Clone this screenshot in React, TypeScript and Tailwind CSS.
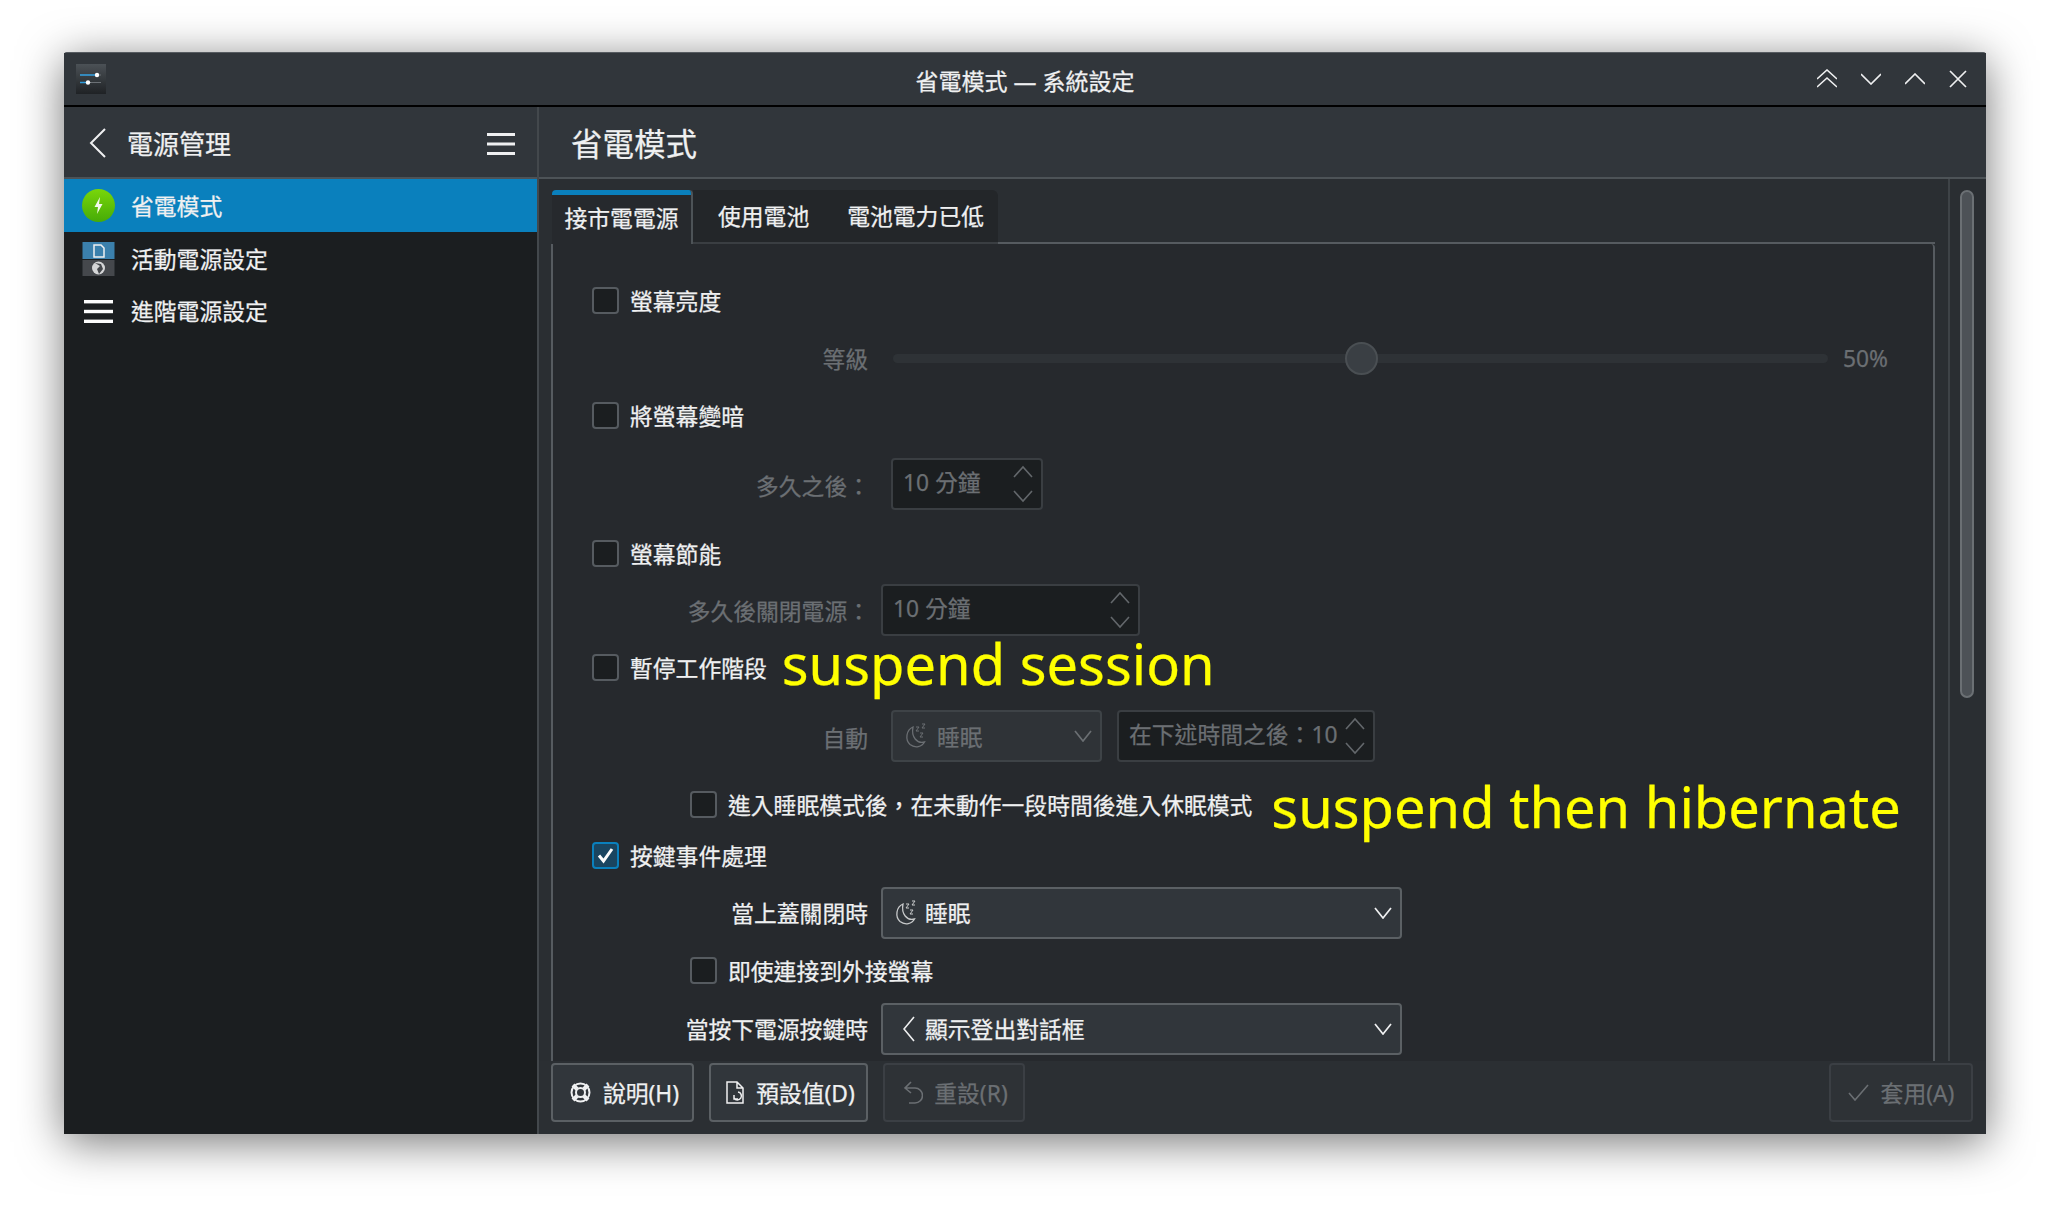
import React from "react";

const Check = ({ checked = false }: { checked?: boolean }) => (
  <span className={`flex h-[27px] w-[27px] shrink-0 items-center justify-center rounded-[4px] border-2 ${checked ? "border-[#0a80bd] bg-[#1a4560]" : "border-[#565b60] bg-[#1b1e20]"}`}>
    {checked && (
      <svg width="19" height="19" viewBox="0 0 19 19" fill="none" stroke="#fcfcfc" strokeWidth="3">
        <path d="M3 9.5 L7.5 15 L16 3" />
      </svg>
    )}
  </span>
);

const CheckRow = ({ text, className, checked, children }: { text: string; className: string; checked?: boolean; children?: React.ReactNode }) => (
  <div className={`flex h-[27px] items-center ${className}`}>
    <Check checked={checked} />
    <span className="ml-[11px] whitespace-nowrap pt-[2px] text-[#eff0f1]">{text}</span>
    {children}
  </div>
);

const Updown = ({ color = "#63676b" }: { color?: string }) => (
  <svg width="22" height="38" viewBox="0 0 22 38" fill="none" stroke={color} strokeWidth="1.6">
    <path d="M2 12 L11 2 L20 12" />
    <path d="M2 26 L11 36 L20 26" />
  </svg>
);

const Caret = ({ color }: { color: string }) => (
  <svg width="18" height="12" viewBox="0 0 18 12" fill="none" stroke={color} strokeWidth="1.7">
    <path d="M1 1 L9 11 L17 1" />
  </svg>
);

const Moon = ({ color }: { color: string }) => (
  <svg width="22" height="26" viewBox="0 0 22 26" fill="none" stroke={color} strokeWidth="1.3">
    <path d="M8 4 C1 7 0 17 5 21.5 C10 25.5 17 24 19.5 19 C12 21 6 14 8 4 Z" />
    <path d="M11 4 H14 L11 8 H14 M17 1 H20 L17 5 H20 M15 10 H18 L15 14 H18" strokeWidth="1" />
  </svg>
);

const Spin = ({ text, className }: { text: string; className: string }) => (
  <div className={`flex h-[52px] items-center justify-between rounded-[4px] border-2 border-[#3a3e42] bg-[#1b1e20] pl-[10px] pr-[7px] text-[#6b6f73] ${className}`}>
    <span className="whitespace-nowrap pb-[3px]">{text}</span>
    <Updown />
  </div>
);

const Btn = ({ icon, text, className, disabled }: { icon: React.ReactNode; text: string; className: string; disabled?: boolean }) => (
  <button className={`flex h-[59px] items-center justify-center rounded-[4px] border-2 ${disabled ? "border-[#3b3f44] bg-[#2e3236] text-[#6b6f73]" : "border-[#5b6064] bg-[#31363b] text-[#eff0f1]"} ${className}`}>
    {icon}
    <span className="whitespace-nowrap pt-[2px]">{text}</span>
  </button>
);

export default function App() {
  return (
    <div className="h-[1210px] w-[2050px] overflow-hidden bg-white pl-[64px] pt-[52px] font-['Noto_Sans','Noto_Sans_CJK_TC',sans-serif] text-[22.8px] leading-[30px] [-webkit-text-stroke:0.25px]">
      <div className="flex h-[1082px] w-[1922px] flex-col rounded-t-[3px] border-t border-[#565b60] bg-[#2a2e32] shadow-[0_8px_45px_rgba(0,0,0,0.55)]">
        {/* Title bar */}
        <div className="grid h-[54px] shrink-0 grid-cols-[1fr_auto_1fr] items-center border-b-2 border-black bg-[#31363b]">
          <svg className="ml-[12px]" width="30" height="30" viewBox="0 0 30 30">
            <defs>
              <linearGradient id="tile" x1="0" y1="0" x2="0" y2="1">
                <stop offset="0" stopColor="#4b5156" />
                <stop offset="1" stopColor="#1f2225" />
              </linearGradient>
            </defs>
            <rect width="30" height="30" fill="url(#tile)" />
            <path d="M4 11 H25 M4 18.5 H25" stroke="#6b7075" strokeWidth="1" />
            <path d="M4 11 H21 M4 18.5 H12" stroke="#2d9bdc" strokeWidth="1.4" />
            <circle cx="21" cy="11" r="2.2" fill="#fff" />
            <circle cx="12" cy="18.5" r="2.2" fill="#fff" />
          </svg>
          <div className="pt-[3px] text-center text-[23px] text-[#eff0f1]">省電模式 — 系統設定</div>
          <div className="mr-[19px] flex items-center justify-end gap-[24px]">
            <svg width="20" height="20" viewBox="0 0 20 20" fill="none" stroke="#eff0f1" strokeWidth="1.6"><path d="M0 10 L10 1 L20 10 M0 18 L10 9 L20 18" /></svg>
            <svg width="20" height="12" viewBox="0 0 20 12" fill="none" stroke="#eff0f1" strokeWidth="1.6"><path d="M0 1 L10 11 L20 1" /></svg>
            <svg width="20" height="12" viewBox="0 0 20 12" fill="none" stroke="#eff0f1" strokeWidth="1.6"><path d="M0 11 L10 1 L20 11" /></svg>
            <svg width="18" height="18" viewBox="0 0 18 18" fill="none" stroke="#eff0f1" strokeWidth="1.7"><path d="M1 1 L17 17 M17 1 L1 17" /></svg>
          </div>
        </div>

        <div className="flex min-h-0 flex-1">
          {/* Sidebar */}
          <div className="flex w-[475px] shrink-0 flex-col border-r-2 border-[#43484c]">
            <div className="flex h-[72px] shrink-0 items-center border-b-2 border-[#4d5357] bg-[#31363b] pl-[25px] pr-[22px]">
              <svg className="mt-[1px]" width="17" height="30" viewBox="0 0 17 30" fill="none" stroke="#eff0f1" strokeWidth="2"><path d="M16 1 L2 15 L16 29" /></svg>
              <span className="ml-[21px] flex-1 pt-[3px] text-[26px] text-[#eff0f1]">電源管理</span>
              <svg className="mt-[3px]" width="28" height="22" viewBox="0 0 28 22" fill="#eff0f1"><rect width="28" height="3" /><rect y="9.5" width="28" height="3" /><rect y="19" width="28" height="3" /></svg>
            </div>
            <div className="flex-1 bg-[#1b1e20] text-[#eff0f1]">
              <div className="flex h-[53px] items-center bg-[#0a80bd] pl-[18px]">
                <svg width="33" height="33" viewBox="0 0 33 33">
                  <defs>
                    <linearGradient id="grn" x1="0" y1="0" x2="0" y2="1">
                      <stop offset="0" stopColor="#79d60a" />
                      <stop offset="1" stopColor="#46ab07" />
                    </linearGradient>
                  </defs>
                  <circle cx="16.5" cy="16.5" r="16.5" fill="url(#grn)" />
                  <path d="M18 8 L12.5 18 H16 L15 25 L20.5 15 H17 Z" fill="#f4f9ea" />
                </svg>
                <span className="ml-[16px] pt-[2px]">省電模式</span>
              </div>
              <div className="flex h-[53px] items-center pl-[18px]">
                <svg width="33" height="34" viewBox="0 0 33 34">
                  <rect x="0.5" width="32" height="17" fill="#3b80ac" />
                  <rect x="0.5" y="18" width="32" height="16" fill="#45484c" />
                  <path d="M12 3 H19 L22 6 V15 H12 Z" fill="none" stroke="#eff0f1" strokeWidth="1.5" />
                  <circle cx="16.5" cy="26" r="6.5" fill="#d5d6d7" />
                  <path d="M13 21 L18 24 L15 27 L17 32 L21 27 L19 22 Z" fill="#45484c" />
                </svg>
                <span className="ml-[16px] pt-[2px]">活動電源設定</span>
              </div>
              <div className="flex h-[53px] items-center pl-[20px]">
                <svg width="29" height="23" viewBox="0 0 29 23" fill="#fcfcfc"><rect width="29" height="3.4" /><rect y="9.8" width="29" height="3.4" /><rect y="19.6" width="29" height="3.4" /></svg>
                <span className="ml-[18px] pt-[1px]">進階電源設定</span>
              </div>
            </div>
          </div>

          {/* Main */}
          <div className="flex min-w-0 flex-1 flex-col">
            <div className="flex h-[72px] shrink-0 items-center border-b-2 border-[#4d5357] bg-[#31363b] pl-[32px] pt-[3px] text-[31.5px] text-[#eff0f1]">省電模式</div>
            <div className="flex min-h-0 flex-1">
              <div className="min-w-0 flex-1 overflow-hidden border-r-2 border-[#3e4347] pl-[12px] pr-[13px] pt-[11px]">
                <div className="flex h-[54px]">
                  <div className="ml-[1px] flex w-[141px] flex-col overflow-hidden rounded-t-[4px] border-r-2 border-[#4d5357] bg-[#26292d]">
                    <div className="h-[5px] shrink-0 bg-[#0a80bd]" />
                    <div className="flex flex-1 items-center justify-center pb-[2px] text-[#eff0f1]">接市電電源</div>
                  </div>
                  <div className="flex w-[305px] items-center rounded-tr-[6px] border-b-2 border-[#3a3e42] bg-[#232629] pl-[25px] pt-[2px] text-[#eff0f1]">
                    <span>使用電池</span>
                    <span className="ml-[38px]">電池電力已低</span>
                  </div>
                  <div className="flex-1 border-b-2 border-[#565b60]" />
                </div>
                <div className="h-[900px] rounded-tr-[4px] border-x-2 border-x-[#565b60] bg-[#26292d] pl-[39px] pt-[1px]">
                  <div className="flex flex-col pr-[10px]">
                    <CheckRow className="mt-[42px]" text="螢幕亮度" />
                    <div className="-ml-[38px] mt-[28px] flex h-[33px] items-center">
                      <span className="w-[314px] pt-[2px] text-right text-[#6b6f73]">等級</span>
                      <div className="relative ml-[25px] h-[9px] w-[935px] rounded-full bg-[#2e3236]">
                        <div className="absolute left-[452px] top-[-12px] h-[33px] w-[33px] rounded-full border-2 border-[#4a4f53] bg-[#3a3f44]" />
                      </div>
                      <span className="ml-[15px] whitespace-nowrap text-[#6b6f73]">50%</span>
                    </div>
                    <CheckRow className="mt-[27px]" text="將螢幕變暗" />
                    <div className="-ml-[38px] mt-[29px] flex h-[52px] items-center">
                      <span className="w-[316px] pt-[6px] text-right text-[#6b6f73]">多久之後：</span>
                      <Spin className="ml-[21px] w-[152px]" text="10 分鐘" />
                    </div>
                    <CheckRow className="mt-[30px]" text="螢幕節能" />
                    <div className="-ml-[38px] mt-[17px] flex h-[52px] items-center">
                      <span className="w-[316px] pt-[4px] text-right text-[#6b6f73]">多久後關閉電源：</span>
                      <Spin className="ml-[11px] w-[259px]" text="10 分鐘" />
                    </div>
                    <CheckRow className="mt-[18px]" text="暫停工作階段">
                      <span className="mb-[9px] ml-[15px] whitespace-nowrap text-[56px] leading-[27px] text-[#ffff00]">suspend session</span>
                    </CheckRow>
                    <div className="-ml-[38px] mt-[29px] flex h-[52px] items-center">
                      <span className="w-[314px] pt-[6px] text-right text-[#6b6f73]">自動</span>
                      <div className="ml-[23px] flex h-[52px] w-[211px] items-center rounded-[4px] border-2 border-[#3e4347] bg-[#2f3337] pl-[12px] pr-[8px] text-[#6b6f73]">
                        <Moon color="#6b6f73" />
                        <span className="ml-[10px] flex-1 pt-[4px]">睡眠</span>
                        <Caret color="#6b6f73" />
                      </div>
                      <Spin className="ml-[15px] w-[258px]" text="在下述時間之後：10" />
                    </div>
                    <CheckRow className="ml-[98px] mt-[29px]" text="進入睡眠模式後，在未動作一段時間後進入休眠模式">
                      <span className="ml-[19px] mt-[4px] whitespace-nowrap text-[56px] leading-[27px] text-[#ffff00]">suspend then hibernate</span>
                    </CheckRow>
                    <CheckRow className="mt-[24px]" checked text="按鍵事件處理" />
                    <div className="-ml-[38px] mt-[18px] flex h-[52px] items-center">
                      <span className="w-[314px] pt-[2px] text-right text-[#eff0f1]">當上蓋關閉時</span>
                      <div className="ml-[13px] flex h-[52px] w-[521px] items-center rounded-[4px] border-2 border-[#5b6064] bg-[#31363b] pl-[12px] pr-[8px] text-[#eff0f1]">
                        <Moon color="#c8cacb" />
                        <span className="ml-[8px] flex-1 pt-[2px]">睡眠</span>
                        <Caret color="#eff0f1" />
                      </div>
                    </div>
                    <CheckRow className="ml-[98px] mt-[18px]" text="即使連接到外接螢幕" />
                    <div className="-ml-[38px] mt-[19px] flex h-[52px] items-center">
                      <span className="w-[314px] pt-[2px] text-right text-[#eff0f1]">當按下電源按鍵時</span>
                      <div className="ml-[13px] flex h-[52px] w-[521px] items-center rounded-[4px] border-2 border-[#5b6064] bg-[#31363b] pl-[20px] pr-[8px] text-[#eff0f1]">
                        <svg width="12" height="26" viewBox="0 0 12 26" fill="none" stroke="#eff0f1" strokeWidth="1.6"><path d="M11 1 L1 13 L11 25" /></svg>
                        <span className="ml-[10px] flex-1 pt-[2px]">顯示登出對話框</span>
                        <Caret color="#eff0f1" />
                      </div>
                    </div>
                  </div>
                </div>
              </div>
              <div className="w-[36px] shrink-0 pl-[10px] pt-[11px]">
                <div className="h-[508px] w-[14px] rounded-full border-2 border-[#6b7074] bg-[#4d5257]" />
              </div>
            </div>
            <div className="flex h-[73px] shrink-0 items-start gap-[15px] bg-[#2b2f33] pl-[12px] pr-[13px] pt-[2px]">
              <Btn
                className="w-[143px] pl-[3px]"
                text="說明(H)"
                icon={
                  <svg className="mr-[11px]" width="23" height="23" viewBox="0 0 23 23" fill="none" stroke="#eff0f1">
                    <circle cx="11.5" cy="11.5" r="9" strokeWidth="2" />
                    <circle cx="11.5" cy="11.5" r="4.5" strokeWidth="2" />
                    <path d="M4 4 L8 8 M19 4 L15 8 M4 19 L8 15 M19 19 L15 15" strokeWidth="4" />
                  </svg>
                }
              />
              <Btn
                className="w-[159px] pl-[3px]"
                text="預設值(D)"
                icon={
                  <svg className="mr-[11px]" width="20" height="24" viewBox="0 0 20 24" fill="none" stroke="#eff0f1" strokeWidth="1.5">
                    <path d="M2 1 H12 L18 7 V22 H2 Z M12 1 V7 H18" />
                    <path d="M13 11 A4 4 0 1 1 9 17 M9 14 V18 H13" />
                  </svg>
                }
              />
              <Btn
                disabled
                className="w-[142px] pl-[3px]"
                text="重設(R)"
                icon={
                  <svg className="mr-[11px]" width="20" height="24" viewBox="0 0 20 24" fill="none" stroke="#6b6f73" strokeWidth="1.6">
                    <path d="M8 1 L2 7 L8 12 M2 7 H12 A6.5 6.5 0 0 1 12 22 H6" />
                  </svg>
                }
              />
              <div className="flex-1" />
              <Btn
                disabled
                className="w-[144px]"
                text="套用(A)"
                icon={
                  <svg className="mr-[12px]" width="21" height="17" viewBox="0 0 21 17" fill="none" stroke="#6b6f73" strokeWidth="1.6">
                    <path d="M1 9 L7 16 L20 1" />
                  </svg>
                }
              />
            </div>
          </div>
        </div>
      </div>
    </div>
  );
}
